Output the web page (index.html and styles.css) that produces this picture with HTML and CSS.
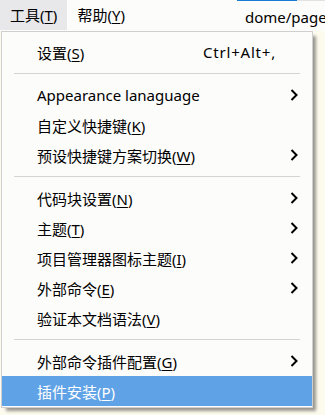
FILE: index.html
```html
<!DOCTYPE html>
<html lang="zh-CN">
<head>
  <meta charset="UTF-8">
  <title>工具菜单</title>
  <link rel="stylesheet" href="styles.css">
</head>
<body>
  <div class="menubar">
    <div class="menubar-item active">工具(<u>T</u>)</div>
    <div class="menubar-item">帮助(<u>Y</u>)</div>
    <div class="tab">dome/page</div>
    <div class="tab-rest"></div>
  </div>
  <div class="editor"></div>

  <div class="menu">
    <div class="menu-item">
      <span>设置(<u>S</u>)</span>
      <span class="shortcut">Ctrl+Alt+,</span>
    </div>
    <div class="separator"></div>
    <div class="menu-item">
      <span>Appearance lanaguage</span>
      <span></span>
      <svg class="arrow" viewBox="0 0 8 12"><polyline points="1.5,1 6.5,6 1.5,11"/></svg>
    </div>
    <div class="menu-item">
      <span>自定义快捷键(<u>K</u>)</span>
    </div>
    <div class="menu-item">
      <span>预设快捷键方案切换(<u>W</u>)</span>
      <span></span>
      <svg class="arrow" viewBox="0 0 8 12"><polyline points="1.5,1 6.5,6 1.5,11"/></svg>
    </div>
    <div class="separator"></div>
    <div class="menu-item">
      <span>代码块设置(<u>N</u>)</span>
      <span></span>
      <svg class="arrow" viewBox="0 0 8 12"><polyline points="1.5,1 6.5,6 1.5,11"/></svg>
    </div>
    <div class="menu-item">
      <span>主题(<u>T</u>)</span>
      <span></span>
      <svg class="arrow" viewBox="0 0 8 12"><polyline points="1.5,1 6.5,6 1.5,11"/></svg>
    </div>
    <div class="menu-item">
      <span>项目管理器图标主题(<u>I</u>)</span>
      <span></span>
      <svg class="arrow" viewBox="0 0 8 12"><polyline points="1.5,1 6.5,6 1.5,11"/></svg>
    </div>
    <div class="menu-item">
      <span>外部命令(<u>E</u>)</span>
      <span></span>
      <svg class="arrow" viewBox="0 0 8 12"><polyline points="1.5,1 6.5,6 1.5,11"/></svg>
    </div>
    <div class="menu-item">
      <span>验证本文档语法(<u>V</u>)</span>
    </div>
    <div class="separator"></div>
    <div class="menu-item">
      <span>外部命令插件配置(<u>G</u>)</span>
      <span></span>
      <svg class="arrow" viewBox="0 0 8 12"><polyline points="1.5,1 6.5,6 1.5,11"/></svg>
    </div>
    <div class="menu-item hover">
      <span>插件安装(<u>P</u>)</span>
    </div>
  </div>
</body>
</html>
```

FILE: styles.css
```css
* {
  box-sizing: border-box;
}

body {
  margin: 0;
  height: 415px;
  overflow: hidden;
  background-color: #fdfaee;
  font-family: 'Noto Sans', 'Noto Sans CJK SC', sans-serif;
  font-size: 15px;
  color: #000;
}

u {
  text-underline-offset: 2px;
}

.menubar {
  display: flex;
  height: 31px;
  background-color: #fcfcfa;
}

.menubar-item {
  padding: 0 10px;
  line-height: 30px;
  height: 30px;
  white-space: nowrap;
}

.menubar-item.active {
  background-color: #e8e8eb;
}

.tab {
  margin-left: 102px;
  width: 60px;
  padding-left: 8px;
  line-height: 32px;
  white-space: nowrap;
  border-top: 1px solid #1a7bd4;
}

.tab-rest {
  flex: 1;
  border-top: 1px solid #e2e2e2;
}

.menu {
  position: absolute;
  left: 1px;
  top: 31px;
  width: 312px;
  padding: 5px 0 1px;
  background-color: #fcfcfa;
  border: 1px solid #cfcfcf;
  box-shadow: 4px 4px 3px -1px rgba(0, 0, 0, 0.4);
}

.menu-item {
  display: grid;
  grid-template-columns: 166px 1fr 8px;
  align-items: center;
  height: 30px;
  padding: 0 14px 0 35px;
  white-space: nowrap;
}

.menu-item.hover {
  background-color: #5fa2e6;
  color: #fff;
}

.shortcut {
  letter-spacing: 0.8px;
}

.arrow {
  width: 8px;
  height: 12px;
  fill: none;
  stroke: #000;
  stroke-width: 2;
}

.separator {
  height: 13px;
  margin: 0 12px;
  display: flex;
  align-items: center;
}

.separator::before {
  content: '';
  flex: 1;
  border-top: 1px solid #d4d4d4;
}
```
